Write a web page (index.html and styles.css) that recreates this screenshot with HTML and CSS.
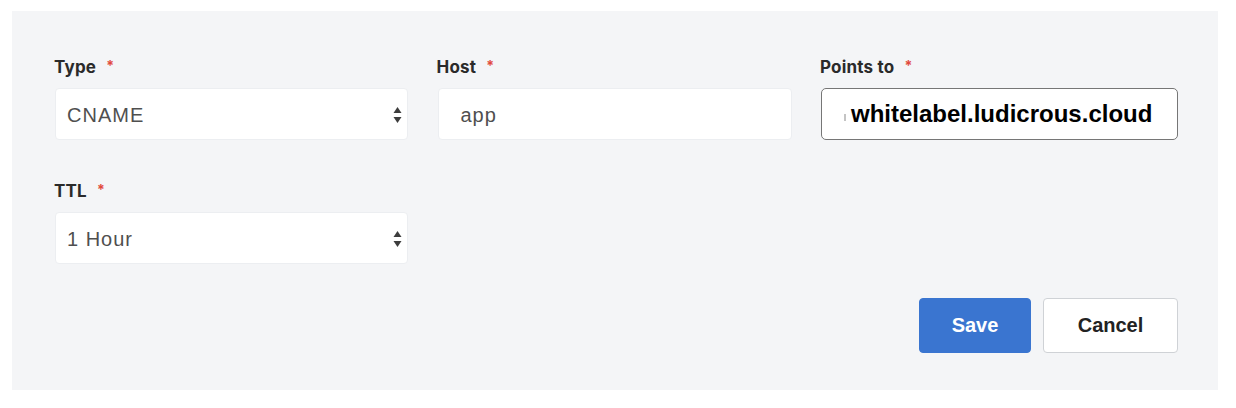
FILE: index.html
```html
<!DOCTYPE html>
<html lang="en">
<head>
<meta charset="utf-8">
<title>DNS record</title>
<link rel="stylesheet" href="styles.css">
</head>
<body>
<div class="panel">
  <div class="grid">
    <div class="field">
      <div class="label">Type<span class="req">*</span></div>
      <div class="control select">
        <span class="value">CNAME</span>
        <svg class="arrows" width="9" height="20" viewBox="0 0 9 20"><path d="M4.5 2 L8.5 8 L0.5 8 Z" fill="#3d3d3d"/><path d="M4.5 18 L8.5 12 L0.5 12 Z" fill="#3d3d3d"/></svg>
      </div>
    </div>
    <div class="field">
      <div class="label">Host<span class="req">*</span></div>
      <div class="control input"><span class="value">app</span></div>
    </div>
    <div class="field">
      <div class="label">Points to<span class="req">*</span></div>
      <div class="control input focused"><span class="frag"></span><span class="strong-value">whitelabel.ludicrous.cloud</span></div>
    </div>
    <div class="field">
      <div class="label">TTL<span class="req">*</span></div>
      <div class="control select">
        <span class="value">1 Hour</span>
        <svg class="arrows" width="9" height="20" viewBox="0 0 9 20"><path d="M4.5 2 L8.5 8 L0.5 8 Z" fill="#3d3d3d"/><path d="M4.5 18 L8.5 12 L0.5 12 Z" fill="#3d3d3d"/></svg>
      </div>
    </div>
  </div>
  <div class="actions">
    <button class="btn primary">Save</button>
    <button class="btn secondary">Cancel</button>
  </div>
</div>
</body>
</html>
```

FILE: styles.css
```css
html, body {
  margin: 0;
  padding: 0;
  background: #ffffff;
}

.panel {
  margin: 11px 18px 0 12px;
  width: 1206px;
  box-sizing: border-box;
  height: 379px;
  background: #f4f5f7;
  padding: 46px 40px 0 43px;
}

.grid {
  display: grid;
  grid-template-columns: 353fr 354fr 357fr;
  column-gap: 29.5px;
  row-gap: 41px;
}

.label {
  font-family: "Inter", "Noto Sans", sans-serif;
  font-weight: 700;
  font-size: 17px;
  line-height: 20px;
  letter-spacing: 0.2px;
  color: #2a2a2a;
  height: 20px;
  margin-bottom: 11px;
  margin-left: -1px;
}

.req {
  color: #e1493c;
  font-size: 14px;
  margin-left: 10px;
  vertical-align: top;
  position: relative;
  top: -1px;
}

.control {
  box-sizing: border-box;
  height: 52px;
  background: #ffffff;
  border: 1px solid #eceef1;
  border-radius: 4px;
  display: flex;
  align-items: center;
}

.select {
  padding: 2px 5px 0 11px;
  justify-content: space-between;
}

.select .arrows {
  margin-top: -1px;
}

.input {
  padding: 2px 10px 0 22px;
}

.value {
  font-family: "Liberation Sans", Arial, sans-serif;
  font-size: 20px;
  letter-spacing: 1px;
  color: #4f4f4f;
}

.focused {
  border: 1.5px solid #767676;
  border-radius: 5px;
  padding: 0 10px 0 22px;
}

.frag {
  display: inline-block;
  width: 2px;
  height: 7px;
  background: #c4c4c4;
  margin: 6px 5px 0 0;
}

.strong-value {
  font-family: "Liberation Sans", Arial, sans-serif;
  font-weight: 700;
  font-size: 24px;
  color: #000000;
  white-space: nowrap;
}

.actions {
  display: flex;
  justify-content: flex-end;
  gap: 12px;
  margin-top: 34px;
}

.btn {
  box-sizing: border-box;
  height: 55px;
  border-radius: 4px;
  font-family: "Liberation Sans", Arial, sans-serif;
  font-weight: 700;
  font-size: 20px;
  cursor: pointer;
  padding: 0;
}

.primary {
  width: 112px;
  background: #3a75d0;
  border: 1px solid #3a75d0;
  color: #ffffff;
}

.secondary {
  width: 135px;
  background: #ffffff;
  border: 1px solid #cfd2d6;
  color: #222222;
}
```
